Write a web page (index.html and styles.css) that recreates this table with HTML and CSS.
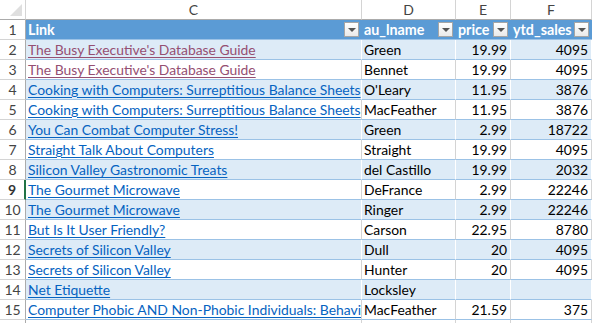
FILE: index.html
```html
<!DOCTYPE html>
<html>
<head>
<meta charset="utf-8">
<link rel="stylesheet" href="styles.css">
</head>
<body>
<div class="sheet">
  <div class="corner"><span class="tri"></span></div>
  <div class="colhead">C</div>
  <div class="colhead">D</div>
  <div class="colhead">E</div>
  <div class="colhead">F</div>

  <div class="rowhead">1</div>
  <div class="th"><span>Link</span><span class="dd"></span></div>
  <div class="th"><span>au_lname</span><span class="dd"></span></div>
  <div class="th"><span>price</span><span class="dd"></span></div>
  <div class="th"><span>ytd_sales</span><span class="dd"></span></div>

  <div class="rowhead">2</div>
  <div class="td band"><a class="visited">The Busy Executive's Database Guide</a></div>
  <div class="td band">Green</div>
  <div class="td band num">19.99</div>
  <div class="td band num">4095</div>

  <div class="rowhead">3</div>
  <div class="td"><a class="visited">The Busy Executive's Database Guide</a></div>
  <div class="td">Bennet</div>
  <div class="td num">19.99</div>
  <div class="td num">4095</div>

  <div class="rowhead">4</div>
  <div class="td band"><a>Cooking with Computers: Surreptitious Balance Sheets</a></div>
  <div class="td band">O'Leary</div>
  <div class="td band num">11.95</div>
  <div class="td band num">3876</div>

  <div class="rowhead">5</div>
  <div class="td"><a>Cooking with Computers: Surreptitious Balance Sheets</a></div>
  <div class="td">MacFeather</div>
  <div class="td num">11.95</div>
  <div class="td num">3876</div>

  <div class="rowhead">6</div>
  <div class="td band"><a>You Can Combat Computer Stress!</a></div>
  <div class="td band">Green</div>
  <div class="td band num">2.99</div>
  <div class="td band num">18722</div>

  <div class="rowhead">7</div>
  <div class="td"><a>Straight Talk About Computers</a></div>
  <div class="td">Straight</div>
  <div class="td num">19.99</div>
  <div class="td num">4095</div>

  <div class="rowhead">8</div>
  <div class="td band"><a>Silicon Valley Gastronomic Treats</a></div>
  <div class="td band">del Castillo</div>
  <div class="td band num">19.99</div>
  <div class="td band num">2032</div>

  <div class="rowhead active">9</div>
  <div class="td"><a>The Gourmet Microwave</a></div>
  <div class="td">DeFrance</div>
  <div class="td num">2.99</div>
  <div class="td num">22246</div>

  <div class="rowhead">10</div>
  <div class="td band"><a>The Gourmet Microwave</a></div>
  <div class="td band">Ringer</div>
  <div class="td band num">2.99</div>
  <div class="td band num">22246</div>

  <div class="rowhead">11</div>
  <div class="td"><a>But Is It User Friendly?</a></div>
  <div class="td">Carson</div>
  <div class="td num">22.95</div>
  <div class="td num">8780</div>

  <div class="rowhead">12</div>
  <div class="td band"><a>Secrets of Silicon Valley</a></div>
  <div class="td band">Dull</div>
  <div class="td band num">20</div>
  <div class="td band num">4095</div>

  <div class="rowhead">13</div>
  <div class="td"><a>Secrets of Silicon Valley</a></div>
  <div class="td">Hunter</div>
  <div class="td num">20</div>
  <div class="td num">4095</div>

  <div class="rowhead">14</div>
  <div class="td band"><a>Net Etiquette</a></div>
  <div class="td band">Locksley</div>
  <div class="td band num"></div>
  <div class="td band num"></div>

  <div class="rowhead">15</div>
  <div class="td"><a>Computer Phobic AND Non-Phobic Individuals: Behavior Variations</a></div>
  <div class="td">MacFeather</div>
  <div class="td num">21.59</div>
  <div class="td num">375</div>

  <div class="rowhead"></div>
  <div class="blank"></div>
  <div class="blank"></div>
  <div class="blank"></div>
  <div class="blank"></div>
</div>
</body>
</html>
```
FILE: styles.css
```css
html, body {
  margin: 0;
  padding: 0;
  background: #ffffff;
  overflow: hidden;
}
.sheet {
  display: grid;
  grid-template-columns: 26px 336px 94px 55px 81px;
  grid-auto-rows: 20px;
  width: 592px;
  height: 323px;
  overflow: hidden;
  font-family: Lato, "Liberation Sans", sans-serif;
  font-size: 13.9px;
  color: #000;
}
.corner {
  position: relative;
  border-right: 1px solid #d4d4d4;
  border-bottom: 1px solid #ababab;
  background: #fff;
}
.tri {
  position: absolute;
  right: 3px;
  bottom: 3px;
  width: 0;
  height: 0;
  border-left: 12px solid transparent;
  border-bottom: 12px solid #dfdfdf;
}
.colhead {
  display: flex;
  align-items: center;
  justify-content: center;
  color: #444;
  font-size: 14px;
  border-right: 1px solid #d4d4d4;
  border-bottom: 1px solid #ababab;
  background: #fff;
}
.rowhead {
  display: flex;
  align-items: center;
  justify-content: center;
  color: #444;
  font-size: 14px;
  border-right: 1px solid #ababab;
  border-bottom: 1px solid #d4d4d4;
  background: #fff;
}
.rowhead.active {
  font-weight: bold;
  color: #333;
  border-right: 2px solid #217346;
}
.th {
  display: flex;
  align-items: center;
  justify-content: space-between;
  background: #5b9bd5;
  color: #fff;
  font-weight: bold;
  font-size: 14.3px;
  padding: 0 3px 0 2px;
  border-bottom: 1px solid #9bc2e6;
  white-space: nowrap;
  overflow: hidden;
}
.dd {
  flex: none;
  position: relative;
  width: 13px;
  height: 13px;
  border: 1px solid #a6a6a6;
  background: linear-gradient(#ffffff, #eaeaea);
}
.dd::after {
  content: "";
  position: absolute;
  left: 3px;
  top: 5px;
  border-left: 4px solid transparent;
  border-right: 4px solid transparent;
  border-top: 4px solid #555;
}
.td {
  display: flex;
  align-items: center;
  padding: 0 3px 0 2px;
  border-bottom: 1px solid #9bc2e6;
  border-right: 1px solid #d4d4d4;
  white-space: nowrap;
  overflow: hidden;
  background: #fff;
}
.td.band {
  background: #ddebf7;
  border-right-color: #ffffff;
}
.td.num {
  justify-content: flex-end;
}
.td a {
  color: #0563c1;
  text-decoration: underline;
  text-underline-offset: 2px;
}
.td a.visited {
  color: #954f72;
}
.blank {
  border-right: 1px solid #d4d4d4;
  border-bottom: 1px solid #d4d4d4;
}
```
